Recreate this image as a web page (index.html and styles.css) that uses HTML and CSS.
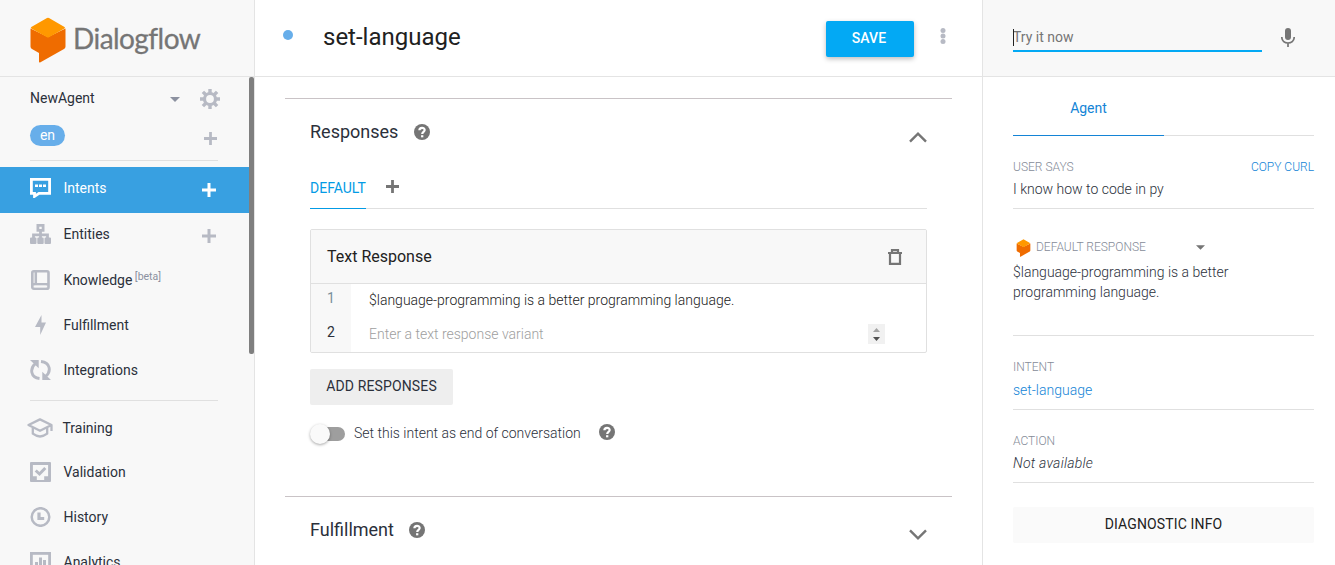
FILE: index.html
```html
<!DOCTYPE html>
<html lang="en">
<head>
<meta charset="utf-8">
<title>Dialogflow</title>
<link rel="stylesheet" href="styles.css">
</head>
<body>
<svg class="defs" aria-hidden="true">
  <defs>
    <symbol id="logo" viewBox="0 0 36 46">
      <path fill="#ef6c00" d="M.5 11.500v18Q.5 31.200 2 32l7 4v8.500q0 1.500 1.500.7l23.500-13.200q1.500-.9 1.500-2.500v-18L18 20z"/>
      <path fill="#ff9800" d="M18 .7q.5 0 1 .3l15.500 9q1 .7 0 1.500L19 20.300q-1 .5-2 0L1.300 11.500q-1-.8 0-1.500L17 1q.5-.3 1-.3z"/>
    </symbol>
    <symbol id="plus" viewBox="0 0 14 14"><path d="M7 0v14M0 7h14" stroke="currentColor" stroke-width="3"/></symbol>
    <symbol id="help" viewBox="0 0 24 24"><path fill="currentColor" d="M12 0a12 12 0 1 0 0 24a12 12 0 1 0 0-24z"/><path d="M8.100 9.500c0-5 7.900-5 7.900-.4 0 2.600-3.700 2.900-3.700 5.900" fill="none" stroke="#fff" stroke-width="3.300"/><path fill="#fff" d="M10.600 16.800h3.400v3.200h-3.400z"/></symbol>
    <symbol id="caret" viewBox="0 0 10 5"><path fill="currentColor" d="M0 0h10L5 5z"/></symbol>
  </defs>
</svg>
<div class="app">
  <aside class="side">
    <div class="brand"><svg class="brand-mark"><use href="#logo"/></svg><span class="brand-name">Dialogflow</span></div>
    <div class="agent">
      <span class="agent-name">NewAgent</span>
      <svg class="caret side-caret"><use href="#caret"/></svg>
      <svg class="gear" viewBox="0 0 20 20"><circle cx="10" cy="10" r="5.500" fill="none" stroke="currentColor" stroke-width="3.200"/><path fill="none" stroke="currentColor" stroke-width="3.400" d="M10 0v4M10 16v4M0 10h4M16 10h4M2.900 2.900l2.900 2.900M14.200 14.200l2.900 2.900M17.100 2.900l-2.900 2.900M5.800 14.200l-2.900 2.900"/></svg>
    </div>
    <div class="langs"><span class="pill">en</span><svg class="plus"><use href="#plus"/></svg></div>
    <hr class="side-rule">
    <nav class="nav">
      <a class="item active"><svg class="ico" viewBox="0 0 21 20"><path fill="none" stroke="currentColor" stroke-width="2.800" d="M1.400 1.400h18.200v14H9l-4.500 3V15.400H1.400z"/><path fill="currentColor" d="M5 6.500h3v2.400H5zM9 6.500h3v2.400H9zM13 6.500h3v2.400h-3z"/></svg><span>Intents</span><svg class="plus add-big"><use href="#plus"/></svg></a>
      <a class="item entities"><svg class="ico" viewBox="0 0 21 20"><path fill="none" stroke="currentColor" stroke-width="2.800" d="M7.900 1.400h5.200v4.900H7.900zM10.500 7v7M3.500 14v-3.200h14V14"/><path fill="currentColor" d="M0 14.500q0-1 1-1h4.500q1 0 1 1V19q0 1-1 1H1q-1 0-1-1zM7.300 14.500q0-1 1-1h4.400q1 0 1 1V19q0 1-1 1H8.300q-1 0-1-1zM14.500 14.500q0-1 1-1H20q1 0 1 1V19q0 1-1 1h-4.500q-1 0-1-1z"/></svg><span>Entities</span><svg class="plus add-big"><use href="#plus"/></svg></a>
      <a class="item knowledge"><svg class="ico" viewBox="0 0 21 20"><rect x="2.300" y="1.300" width="16.200" height="17.400" rx="1.500" fill="none" stroke="currentColor" stroke-width="2.600"/><path fill="none" stroke="currentColor" stroke-width="2.500" d="M5.800 1v13.500M2 14.300h16"/><path fill="#f8f8f8" d="M4.500 15.600h11.600v1.700H4.500z"/></svg><span>Knowledge <sup>[beta]</sup></span></a>
      <a class="item fulfill"><svg class="ico" viewBox="0 0 21 20"><path fill="currentColor" d="M11.500 0v7.500H16L10.200 20v-8H5z"/></svg><span>Fulfillment</span></a>
      <a class="item integr"><svg class="ico" viewBox="0 0 21 20"><path fill="none" stroke="currentColor" stroke-width="2.900" d="M5.500 3.500C-.5 8.500.5 17.500 9.500 18.500M15.500 16.500C21.500 11.500 20.500 2.500 11 1.500"/><path fill="currentColor" d="M0 0h8.700v8.300zM21 20h-8.700v-8.300z"/></svg><span>Integrations</span></a>
      <hr class="side-rule">
      <a class="item training"><svg class="ico cap" viewBox="0 0 26 20"><path fill="none" stroke="currentColor" stroke-width="2.300" stroke-linejoin="round" d="M1.500 7L13 1.400 24.500 7 13 12.800zM5.800 9.500v6.200q7.200 5.500 14.400 0V9.500M24.500 7v6"/></svg><span>Training</span></a>
      <a class="item"><svg class="ico" viewBox="0 0 21 20"><path fill="currentColor" fill-rule="evenodd" d="M1 0h19q1 0 1 1v18q0 1-1 1H1q-1 0-1-1V1q0-1 1-1zM2.900 2.900v11.300h3.900V18h7.400v-3.800h3.900V2.900z"/><path fill="none" stroke="currentColor" stroke-width="3" d="M5.700 8.500l3.800 3.500 5.800-6"/></svg><span>Validation</span></a>
      <a class="item history"><svg class="ico" viewBox="0 0 21 20"><circle cx="10.500" cy="10" r="8.800" fill="none" stroke="currentColor" stroke-width="2.500"/><path fill="none" stroke="currentColor" stroke-width="3.200" d="M9 5.500v6h5.200"/></svg><span>History</span></a>
      <a class="item"><svg class="ico" viewBox="0 0 21 20"><rect x="1.400" y="1.400" width="18.200" height="17.200" fill="none" stroke="currentColor" stroke-width="2.800"/><path fill="currentColor" d="M5 10h3v9H5zM9 5.500h3V19H9zM13 8h3v11h-3z"/></svg><span>Analytics</span></a>
    </nav>
    <div class="scrollbar"></div>
  </aside>

  <main class="main">
    <header class="top">
      <i class="dot"></i><h1>set-language</h1>
      <button class="save">SAVE</button>
      <svg class="more" viewBox="0 0 6 16"><g fill="#b7bac4"><circle cx="3" cy="2.500" r="2.500"/><circle cx="3" cy="8" r="2.500"/><circle cx="3" cy="13.500" r="2.500"/></g></svg>
    </header>
    <section class="panel">
      <div class="panel-head"><h2>Responses</h2><svg class="help"><use href="#help"/></svg>
        <svg class="chev chev-up" viewBox="0 0 18 11"><path d="M1 9.700L9 1.700l8 8"/></svg></div>
      <div class="tabs"><span class="tab">DEFAULT</span><svg class="plus tab-plus"><use href="#plus"/></svg></div>
      <div class="card">
        <div class="card-head"><span>Text Response</span>
          <svg class="trash" viewBox="0 0 14 16"><path fill="none" stroke="currentColor" stroke-width="2.200" d="M2 4v10.900h10V4M0 4h14M4 3V1.100h6V3"/></svg></div>
        <div class="line"><b class="num muted">1</b><span class="value">$language-programming is a better programming language.</span></div>
        <div class="line"><b class="num">2</b><span class="value hint">Enter a text response variant</span>
          <svg class="spin" viewBox="0 0 17 20"><path fill="#f1f1f1" d="M0 0h17v20H0z"/><path fill="#a3a3a3" d="M5 8l3.500-4L12 8z"/><path fill="#505050" d="M5 13l3.500 4 3.500-4z"/></svg></div>
      </div>
      <button class="add">ADD RESPONSES</button>
      <div class="end"><span class="switch"><i class="knob"></i></span><span class="end-text">Set this intent as end of conversation</span><svg class="help"><use href="#help"/></svg></div>
    </section>
    <section class="panel second">
      <div class="panel-head"><h2>Fulfillment</h2><svg class="help"><use href="#help"/></svg>
        <svg class="chev chev-down" viewBox="0 0 18 11"><path d="M1 1.300l8 8 8-8"/></svg></div>
    </section>
  </main>

  <aside class="tryout">
    <div class="ask">
      <div class="field"><i class="cursor"></i>Try it now</div>
      <svg class="mic" viewBox="0 0 14 19"><rect x="4" y="0" width="6" height="12" rx="3" fill="#757575"/><path d="M.8 9c0 8 12.400 8 12.400 0M7 15v4" fill="none" stroke="#757575" stroke-width="1.700"/></svg>
    </div>
    <div class="result">
      <div class="modes"><span class="mode">Agent</span></div>
      <div class="block says"><div class="label"><span>USER SAYS</span><a class="curl">COPY CURL</a></div><p>I know how to code in py</p></div>
      <div class="block resp"><div class="label"><svg class="mini"><use href="#logo"/></svg><span>DEFAULT RESPONSE</span><svg class="caret resp-caret"><use href="#caret"/></svg></div><p>$language-programming is a better<br>programming language.</p></div>
      <div class="block intent"><div class="label">INTENT</div><p class="link">set-language</p></div>
      <div class="block action"><div class="label">ACTION</div><p><em>Not available</em></p></div>
      <button class="diag">DIAGNOSTIC INFO</button>
    </div>
  </aside>
</div>
</body>
</html>
```
FILE: styles.css
```css
* { box-sizing: border-box; }
body { margin: 0; overflow: hidden; background: #fff; color: #2b303b; font: 14px/20px Roboto, sans-serif; }
h1, h2, hr { margin: 0; font-weight: 400; }
p { margin: 0; }
button { border: 0; padding: 0; font: 400 14px/36px Roboto, sans-serif; letter-spacing: .14px; color: #212121; }
svg { display: block; flex: none; }
.defs { position: absolute; width: 0; height: 0; }
.app { display: grid; grid-template-columns: 255px 727px 353px; height: 565px; }

/* Sidebar */
.side { position: relative; height: 565px; overflow: hidden; background: #f8f8f8; border-right: 1px solid #e4e4e4; }
.brand { display: flex; height: 77px; padding: 17px 0 0 30px; border-bottom: 1px solid #e4e4e4; }
.brand-mark { width: 36px; height: 46px; }
.brand-name { margin: 1px 0 0 7px; font: 400 28px/40px Lato, sans-serif; color: #757575; letter-spacing: -.55px; -webkit-text-stroke: .3px #757575; }
.agent { display: flex; align-items: center; height: 43px; padding: 0 0 2px 30px; }
.agent-name { width: 140px; }
.caret { width: 10px; height: 5px; }
.side-caret { margin-top: 4px; color: #8c91a0; }
.gear { width: 20px; height: 20px; margin: 3px 0 0 20px; color: #b7bac4; }
.langs { display: flex; justify-content: space-between; height: 40px; padding: 5px 37px 0 30px; }
.pill { width: 35px; height: 21px; border-radius: 11px; background: #67aeea; color: #fff; line-height: 20px; text-align: center; }
.plus { width: 13px; height: 13px; color: #b7bac4; }
.langs .plus { margin-top: 7px; }
.side-rule { width: 188px; height: 1px; margin-left: 30px; border: 0; background: #e0e0e0; }
.nav { padding-top: 6px; }
.item { display: flex; align-items: center; height: 44px; padding: 0 38px 0 30px; }
.ico { width: 21px; height: 20px; margin-right: 12.500px; color: #b7bac4; }
.item .plus { width: 14px; height: 14px; margin: 4px 0 0 auto; }
.active { width: 249px; height: 46px; padding: 0 33px 4px 30px; background: #38a0e1; color: #fff; }
.active .ico, .item.active .plus { color: #fff; }
.item.active .plus { margin-top: 4px; }
.entities { padding-bottom: 2px; }
.knowledge, .integr, .history { height: 46px; }
.nav .side-rule { margin-top: 7px; margin-bottom: 5px; }
.cap { width: 26px; margin: 0 9.500px 0 -3px; }
sup { font-size: 10.500px; line-height: 0; color: #8b90a0; vertical-align: 5px; margin-left: -1px; }
.scrollbar { position: absolute; right: 0; top: 77px; width: 5px; height: 277px; border-radius: 2px; background: #7f7f7f; }

/* Intent editor */
.main { min-width: 0; }
.top { display: flex; height: 77px; padding-left: 28px; border-bottom: 1px solid #e4e4e4; }
.dot { width: 10px; height: 10px; margin-top: 30px; border-radius: 50%; background: #67aeea; }
h1 { width: 503px; margin: 21px 0 0 30px; font-size: 24px; line-height: 32px; color: #212121; }
.save { width: 88px; height: 36px; margin-top: 21px; border-radius: 2px; background: #03a9f4; color: #fff; font-weight: 500; line-height: 34px; padding: 0 2px 2px 0; box-shadow: 0 2px 5px rgba(0, 0, 0, .26); }
.more { width: 6px; height: 16px; margin: 28px 0 0 26px; }
.panel { width: 667px; height: 398px; margin: 21px 0 0 30px; padding: 0 25px; border-top: 1px solid #c9c3c6; }
.panel.second { height: 68px; margin-top: 0; }
.panel-head { display: flex; height: 65px; padding-top: 21px; }
h2 { font-size: 18px; line-height: 24px; }
.help { width: 16px; height: 16px; margin: 3.500px 0 0 15.500px; color: #757575; }
.chev { width: 18px; height: 11px; margin: 12px .5px 0 auto; fill: none; stroke: #757575; stroke-width: 2.400px; }
.chev-down { margin-top: 11px; }
.tabs { display: flex; height: 46px; margin-top: -1px; border-bottom: 1px solid #e0e0e0; }
.tab { height: 46px; padding-top: 15px; border-bottom: 1px solid #039be5; color: #039be5; }
.tab-plus { margin: 17px 0 0 20.500px; color: #757575; }
.card { margin-top: 20px; height: 124px; border: 1px solid #e0e0e0; border-radius: 2px; overflow: hidden; }
.card-head { display: flex; justify-content: space-between; align-items: center; height: 54px; padding: 0 24px 0 16px; border-bottom: 1px solid #e0e0e0; background: #f8f8f8; font-size: 16px; color: #212121; }
.trash { width: 14px; height: 16px; margin-top: 1px; color: #757575; }
.line { display: flex; height: 34px; font-weight: 300; }
.num { width: 40px; height: 36px; padding: 4px 0 0 16px; background: #f8f8f8; font-weight: 400; }
.muted { color: #78909c; }
.value { width: 517px; padding: 6px 0 0 18px; color: #212121; }
.hint { color: #9e9e9e; }
.spin { width: 17px; height: 20px; margin-top: 6px; }
.add { display: block; width: 143px; height: 36px; margin-top: 16px; padding-bottom: 2px; border-radius: 2px; background: #eee; color: #2b303b; line-height: 32px; }
.end { display: flex; margin-top: 18px; font-weight: 300; }
.switch { position: relative; width: 31px; height: 14px; margin: 4px 0 0 4px; border-radius: 7px; background: #9e9e9e; }
.knob { position: absolute; left: -4px; top: -3px; width: 20px; height: 20px; border-radius: 50%; background: #fafafa; box-shadow: 0 1px 3px rgba(0, 0, 0, .35); }
.end-text { margin-left: 9px; }
.end .help { margin: 1px 0 0 18px; }

/* Test console */
.tryout { border-left: 1px solid #e4e4e4; }
.ask { display: flex; height: 77px; padding: 27px 0 0 30px; border-bottom: 1px solid #e4e4e4; background: #f8f8f8; color: #757575; }
.field { position: relative; width: 249px; height: 25px; border-bottom: 2px solid #03a9f4; }
.cursor { position: absolute; left: 0; top: 2px; width: 1px; height: 17px; background: #212121; }
.mic { width: 14px; height: 19px; margin: 1px 0 0 19px; }
.result { padding: 0 21px 0 30px; }
.modes { height: 59px; border-bottom: 1px solid #e0e0e0; }
.mode { display: block; width: 151px; height: 59px; padding-top: 21px; border-bottom: 1px solid #1484d6; color: #1484d6; text-align: center; }
.block { border-bottom: 1px solid #e0e0e0; font-weight: 300; }
.label { display: flex; font-size: 12px; line-height: 20px; color: #858b98; }
.says { height: 73px; padding-top: 21px; }
.says p { margin-top: 2px; }
.curl { margin-left: auto; color: #1484d6; }
.resp { height: 127px; padding-top: 28px; }
.resp p { margin-top: 5px; }
.mini { width: 15px; height: 18px; margin: 2px 5px 0 3px; }
.resp-caret { width: 9px; margin: 8px 0 0 50px; color: #757575; }
.intent { height: 74px; padding-top: 21px; }
.intent p { margin-top: 3px; }
.action { height: 73px; padding-top: 21px; }
.action p { margin-top: 2px; letter-spacing: .25px; }
.link { color: #1484d6; }
.diag { width: 100%; height: 36px; margin-top: 24px; padding-bottom: 2px; border-radius: 2px; background: #fafafa; line-height: 32px; }
```
